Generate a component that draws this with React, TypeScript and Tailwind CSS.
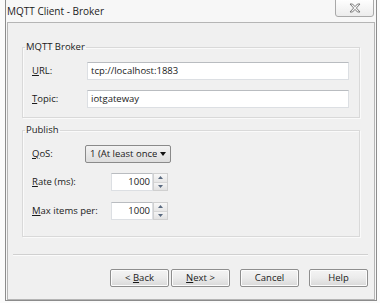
import React from 'react';

const font = { fontFamily: '"Open Sans", "Noto Sans", sans-serif' };

function Key({ k, rest }: { k: string; rest: string }) {
  return (
    <span>
      <span className="underline underline-offset-[1px]">{k}</span>
      {rest}
    </span>
  );
}

function TextBox({ value, className = '' }: { value: string; className?: string }) {
  return (
    <div
      className={`h-[18px] bg-white border border-[#dcdfe3] border-t-[#b9bcc0] flex items-center px-[3px] text-[9.5px] text-[#1a1a1a] ${className}`}
    >
      {value}
    </div>
  );
}

function Spinner({ value }: { value: string }) {
  return (
    <div className="flex h-[18px]">
      <div className="w-[42px] bg-white border border-[#dcdfe3] border-t-[#b9bcc0] flex items-center justify-end pr-[2px] text-[9.5px] text-[#1a1a1a]">
        {value}
      </div>
      <div className="w-[15px] flex flex-col border border-[#d0d0d0] bg-[#f4f4f4]">
        <div className="flex-1 flex items-center justify-center border-b border-[#d6d6d6] bg-gradient-to-b from-[#f8f8f8] to-[#e6e6e6]">
          <svg width="5" height="3" viewBox="0 0 5 3">
            <path d="M0 3 L2.5 0 L5 3 Z" fill="#5a6a80" />
          </svg>
        </div>
        <div className="flex-1 flex items-center justify-center bg-gradient-to-b from-[#f4f4f4] to-[#e2e2e2]">
          <svg width="5" height="3" viewBox="0 0 5 3">
            <path d="M0 0 L2.5 3 L5 0 Z" fill="#5a6a80" />
          </svg>
        </div>
      </div>
    </div>
  );
}

function DlgButton({ children }: { children: React.ReactNode }) {
  return (
    <div className="w-[59px] h-[18px] rounded-[2px] border border-[#8e8e8e] bg-gradient-to-b from-[#f4f4f4] via-[#ebebeb] to-[#d8d8d8] shadow-[inset_0_0_0_1px_#fcfcfc] flex items-center justify-center text-[9.5px] text-[#1a1a1a]">
      <span className="whitespace-pre">{children}</span>
    </div>
  );
}

export default function App() {
  return (
    <div className="w-[380px] h-[303px] bg-[#fbfbfb] overflow-hidden" style={font}>
      <div className="ml-[5px] w-[372px] h-[301px] border-x border-b border-[#8c8c8c] bg-[#f7f7f7] flex flex-col">
        {/* title row */}
        <div className="h-[22px] flex justify-between">
          <div className="pl-[1px] pt-[4px] text-[10px] leading-[14px] text-[#1c1c1c]">MQTT Client - Broker</div>
          <div className="-mt-[2px] mr-[2px] w-[39px] h-[19px] rounded-b-[3px] border border-[#a9a9a9] bg-gradient-to-b from-[#ffffff] to-[#ececec] flex items-center justify-center">
            <svg width="12" height="10" viewBox="0 0 12 10">
              <path
                d="M1 1 H3.5 L6 3.6 L8.5 1 H11 L7.4 5 L11 9 H8.5 L6 6.4 L3.5 9 H1 L4.6 5 Z"
                fill="#f4f4f4"
                stroke="#6e6e6e"
                strokeWidth="0.9"
                strokeLinejoin="round"
              />
            </svg>
          </div>
        </div>

        {/* body */}
        <div className="mx-[1px] flex-1 border border-[#b5b5b5] bg-[#f0f0f0] flex flex-col text-[#1a1a1a]">
          <fieldset className="mt-[18px] mx-[14px] border border-[#d9d9d9] shadow-[inset_1px_1px_0_#fafafa,1px_1px_0_#fafafa] px-[9px] pt-[9px] pb-[9px] flex flex-col gap-[10px]">
            <legend className="-ml-[7px] px-[1px] text-[9.5px] leading-[12px]">MQTT Broker</legend>
            <div className="flex items-center">
              <div className="w-[55px] text-[9.5px]"><Key k="U" rest="RL:" /></div>
              <TextBox value="tcp://localhost:1883" className="flex-1 mr-[1px]" />
            </div>
            <div className="flex items-center">
              <div className="w-[55px] text-[9.5px]"><Key k="T" rest="opic:" /></div>
              <TextBox value="iotgateway" className="flex-1 mr-[1px]" />
            </div>
          </fieldset>

          <fieldset className="mt-[6px] mx-[14px] border border-[#d9d9d9] shadow-[inset_1px_1px_0_#fafafa,1px_1px_0_#fafafa] px-[9px] pt-[9px] pb-[16px] flex flex-col">
            <legend className="-ml-[7px] px-[1px] text-[9.5px] leading-[12px]">Publish</legend>
            <div className="flex items-center">
              <div className="w-[53px] text-[9.5px]"><Key k="Q" rest="oS:" /></div>
              <div className="w-[86px] h-[18px] rounded-[2px] border border-[#8a8a8a] bg-gradient-to-b from-[#f3f3f3] to-[#dddddd] flex items-center overflow-hidden">
                <span className="flex-1 pl-[4px] text-[9.5px] whitespace-nowrap overflow-hidden">1 (At least once)</span>
                <svg width="13" height="6" viewBox="0 0 13 6" className="shrink-0">
                  <path d="M3 1 L9 1 L6 5 Z" fill="#111" />
                </svg>
              </div>
            </div>
            <div className="flex items-center mt-[10px]">
              <div className="w-[79px] text-[9.5px]"><Key k="R" rest="ate (ms):" /></div>
              <Spinner value="1000" />
            </div>
            <div className="flex items-center mt-[11px]">
              <div className="w-[79px] text-[9.5px]"><Key k="M" rest="ax items per:" /></div>
              <Spinner value="1000" />
            </div>
          </fieldset>

          <div className="mt-[17px] ml-[5px] mr-[6px] h-[2px] border-t border-[#d0d0d0] border-b border-b-[#fbfbfb]" />

          <div className="mt-[13px] pr-[6px] flex justify-end">
            <DlgButton>{'< '}<Key k="B" rest="ack" /></DlgButton>
            <div className="ml-[2px]">
              <DlgButton><Key k="N" rest="ext" />{' >'}</DlgButton>
            </div>
            <div className="ml-[10px]">
              <DlgButton>Cancel</DlgButton>
            </div>
            <div className="ml-[10px]">
              <DlgButton>Help</DlgButton>
            </div>
          </div>
        </div>
      </div>
    </div>
  );
}
